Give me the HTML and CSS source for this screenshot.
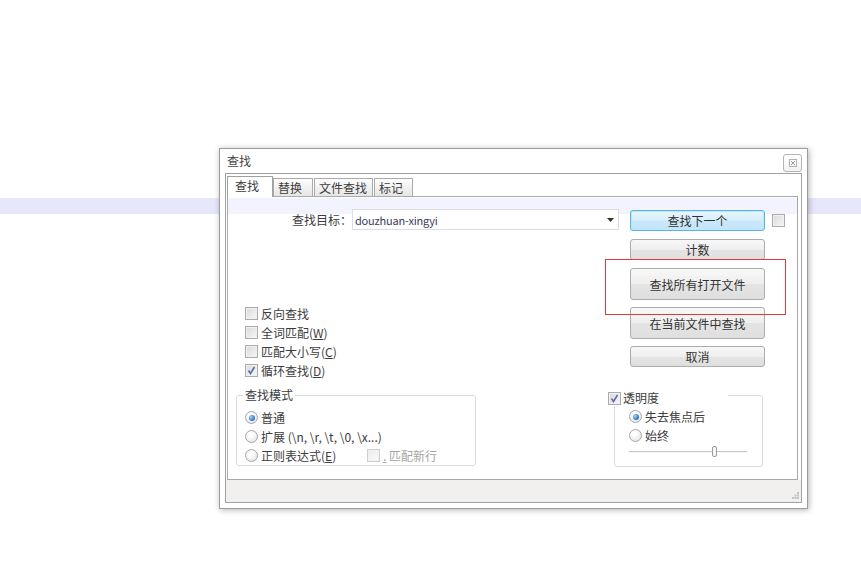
FILE: index.html
```html
<!DOCTYPE html>
<html>
<head>
<meta charset="utf-8">
<title>查找</title>
<link rel="stylesheet" href="styles.css">
</head>
<body>
<div class="band"></div>
<div class="dialog">
  <div class="titlebar">
    <span class="title">查找</span>
    <button class="close" type="button">
      <svg width="8" height="8" viewBox="0 0 8 8"><rect x="0.5" y="0.5" width="7" height="7" fill="none" stroke="#b0b0b0"/><path d="M2 2 L6 6 M6 2 L2 6" stroke="#a0a0a0" stroke-width="1"/></svg>
    </button>
  </div>
  <div class="frame">
    <div class="tabs">
      <div class="tab active">查找</div>
      <div class="tab t2">替换</div>
      <div class="tab t3">文件查找</div>
      <div class="tab t4">标记</div>
    </div>
    <div class="page">
      <div class="left">
        <div class="search-row">
          <span class="search-label">查找目标：</span>
          <div class="combo">
            <span class="combo-text">douzhuan-xingyi</span>
            <svg class="arrow" width="7" height="4" viewBox="0 0 7 4"><path d="M0 0 H7 L3.5 4 Z" fill="#333"/></svg>
          </div>
        </div>
        <div class="checks">
          <div class="row"><span class="cb"></span>反向查找</div>
          <div class="row"><span class="cb"></span>全词匹配(<u>W</u>)</div>
          <div class="row"><span class="cb"></span>匹配大小写(<u>C</u>)</div>
          <div class="row"><span class="cb on"><svg width="11" height="11" viewBox="0 0 11 11"><path d="M2.5 5.5 L4.5 8.5 L8.5 2" fill="none" stroke="#5b6fae" stroke-width="1.6"/></svg></span>循环查找(<u>D</u>)</div>
        </div>
        <fieldset class="group mode">
          <legend>查找模式</legend>
          <div class="row"><span class="rb on"></span>普通</div>
          <div class="row"><span class="rb"></span>扩展 (\n, \r, \t, \0, \x...)</div>
          <div class="row"><span class="rb"></span><span class="regex">正则表达式(<u>E</u>)</span><span class="cb disabled"></span><span class="dim"><u>.</u> 匹配新行</span></div>
        </fieldset>
      </div>
      <div class="right">
        <div class="btn-row">
          <button class="btn default" type="button">查找下一个</button>
          <span class="cb"></span>
        </div>
        <button class="btn b-count" type="button">计数</button>
        <button class="btn tall b-all" type="button">查找所有打开文件</button>
        <button class="btn tall b-cur" type="button">在当前文件中查找</button>
        <button class="btn b-cancel" type="button">取消</button>
        <fieldset class="group trans">
          <legend><span class="cb on"><svg width="11" height="11" viewBox="0 0 11 11"><path d="M2.5 5.5 L4.5 8.5 L8.5 2" fill="none" stroke="#5b6fae" stroke-width="1.6"/></svg></span>透明度</legend>
          <div class="row"><span class="rb on"></span>失去焦点后</div>
          <div class="row"><span class="rb"></span>始终</div>
          <div class="slider-row"><div class="slider"><span class="thumb"></span></div></div>
        </fieldset>
      </div>
    </div>
    <div class="status">
      <svg width="7" height="7" viewBox="0 0 7 7"><g fill="#c4c4c4"><rect x="5" y="0" width="2" height="2"/><rect x="2.5" y="2.5" width="2" height="2"/><rect x="5" y="2.5" width="2" height="2"/><rect x="0" y="5" width="2" height="2"/><rect x="2.5" y="5" width="2" height="2"/><rect x="5" y="5" width="2" height="2"/></g></svg>
    </div>
  </div>
</div>
<div class="annot"></div>
</body>
</html>
```

FILE: styles.css
```css
* { box-sizing: border-box; }
html, body { margin: 0; padding: 0; background: #fff; }
body {
  width: 861px;
  height: 564px;
  overflow: hidden;
  position: relative;
  font-family: "Noto Sans CJK SC", "Noto Sans", sans-serif;
  font-size: 12px;
  color: #3c3c3c;
}
.band { margin-top: 198px; height: 16px; background: #e7e7fb; }

.dialog {
  position: absolute;
  left: 219px;
  top: 148px;
  width: 589px;
  height: 361px;
  border: 1px solid #9c9c9c;
  background: #fff;
  box-shadow: 1px 1px 6px rgba(0,0,0,0.3);
  display: flex;
  flex-direction: column;
}
.titlebar {
  height: 24px;
  display: flex;
  justify-content: space-between;
  align-items: flex-start;
  padding: 0 5px 0 7px;
}
.title { line-height: 24px; color: #444; }
.close {
  margin-top: 5px;
  width: 19px;
  height: 18px;
  padding: 0;
  border: 1px solid #b4b4b4;
  border-radius: 3px;
  background: linear-gradient(#fff, #f2f2f2);
  display: flex;
  align-items: center;
  justify-content: center;
}
.frame {
  margin: 0 5px;
  height: 330px;
  border: 1px solid #a2a2a2;
  padding-top: 2px;
  display: flex;
  flex-direction: column;
}
.tabs {
  display: flex;
  align-items: flex-end;
  height: 21px;
  margin: 0 0 -1px 1px;
  position: relative;
  z-index: 1;
}
.tab {
  height: 18px;
  margin-bottom: 1px;
  border: 1px solid #aaaaaa;
  border-bottom: none;
  background: linear-gradient(#fdfdfd, #e6e6e6);
  padding-left: 4px;
  line-height: 17px;
  color: #3c3c3c;
  white-space: nowrap;
}
.tab.active {
  height: 21px;
  margin-bottom: 0;
  width: 46px;
  background: #fff;
  border-color: #a0a0a0;
  padding-left: 7px;
  line-height: 18px;
}
.t2 { width: 40px; }
.t3 { width: 59px; margin-left: 1px; }
.t4 { width: 39px; margin-left: 1px; }

.page {
  margin: 0 3px 0 1px;
  height: 284px;
  border: 1px solid #a9a9a9;
  display: flex;
  background: linear-gradient(to bottom, #fff 1px, #f3f3fd 1px, #f3f3fd 17px, #fff 17px);
}
.left { width: 372px; flex: none; }
.right { flex: 1; }

.search-row { display: flex; align-items: center; margin-top: 12px; height: 21px; }
.search-label { width: 124px; flex: none; text-align: right; line-height: 20px; }
.combo {
  width: 267px;
  flex: none;
  height: 21px;
  border: 1px solid #dcdde4;
  background: #fff;
  display: flex;
  align-items: center;
  justify-content: space-between;
  padding: 0 4px 0 2px;
  color: #3b3b5c;
}
.combo-text { font-size: 11px; line-height: 18px; letter-spacing: -0.2px; }

.row { display: flex; align-items: center; height: 19px; line-height: 18px; white-space: nowrap; }
.checks { margin-top: 74px; padding-left: 17px; }

.cb {
  width: 13px;
  height: 13px;
  flex: none;
  border: 1px solid #ababab;
  background: linear-gradient(135deg, #d9d9d9, #f7f7f7);
  box-shadow: inset 0 0 0 1px #f0f0f0;
  margin-right: 3px;
  display: flex;
  align-items: center;
  justify-content: center;
}
.cb.disabled { border-color: #cfcfcf; background: linear-gradient(135deg, #ececec, #fafafa); }
.rb {
  width: 13px;
  height: 13px;
  flex: none;
  border-radius: 50%;
  border: 1px solid #a8a8a8;
  background: radial-gradient(circle at 40% 35%, #fff 20%, #dcdcdc);
  margin-right: 3px;
  display: flex;
  align-items: center;
  justify-content: center;
}
.rb.on::after {
  content: "";
  width: 6px;
  height: 6px;
  border-radius: 50%;
  background: radial-gradient(circle at 35% 35%, #a8d4f6, #2a6fbd 70%);
}
.regex { width: 106px; flex: none; }
.dim { color: #a6a6a6; }

.group {
  border: 1px solid #d9dde2;
  border-radius: 3px;
  min-width: 0;
}
.group legend { line-height: 16px; }
.mode {
  margin: 7px 0 0 8px;
  width: 240px;
  padding: 5px 0 0 8px;
}
.mode legend { padding: 0 2px; margin-left: -2px; }

.btn {
  display: block;
  width: 135px;
  height: 21px;
  margin-left: 30px;
  padding: 0;
  border: 1px solid #acacac;
  border-radius: 3px;
  background: linear-gradient(#f8f8f8, #eeeeee 50%, #e4e4e4 51%, #dfdfdf);
  font: inherit;
  color: #333;
  line-height: 19px;
}
.btn-row { display: flex; align-items: center; margin-top: 13px; }
.btn-row .btn { margin-right: 7px; }
.btn.default {
  border-color: #5cb2e6;
  background: linear-gradient(#e9f6fd, #d6eefb 50%, #c9e8fa 51%, #c3e5f9);
  box-shadow: inset 0 0 0 1px #bfe6fb;
}
.btn-row .cb { margin-right: 0; }
.tall { height: 32px; }
.b-count { margin-top: 8px; }
.b-all { margin-top: 8px; }
.b-cur { margin-top: 7px; }
.b-cancel { margin-top: 7px; }

.trans {
  margin: 18px 0 0 14px;
  width: 149px;
  padding: 1px 0 6px 0;
}
.trans legend {
  width: 120px;
  padding: 5px 0 0 0;
  margin-left: -7px;
  display: flex;
  align-items: center;
}
.trans legend .cb { margin-right: 2px; }
.trans .row { margin-left: 14px; }
.slider-row { height: 15px; margin-left: 14px; padding-top: 1px; }
.slider {
  width: 118px;
  height: 11px;
  display: flex;
  background: linear-gradient(to bottom, transparent 5px, #c8c8c8 5px, #c8c8c8 6px, #f6f6f6 6px, #f6f6f6 7px, transparent 7px);
}
.thumb {
  margin-left: 83px;
  width: 5px;
  height: 11px;
  border: 1px solid #9c9c9c;
  border-radius: 2px;
  background: #f5f5f5;
}

.status {
  flex: 1;
  background: #f1f0ee;
  display: flex;
  justify-content: flex-end;
  align-items: flex-end;
  padding: 0 2px 3px 0;
}

.annot {
  position: absolute;
  left: 605px;
  top: 259px;
  width: 181px;
  height: 56px;
  border: 1px solid #e8353b;
  z-index: 2;
}
```
